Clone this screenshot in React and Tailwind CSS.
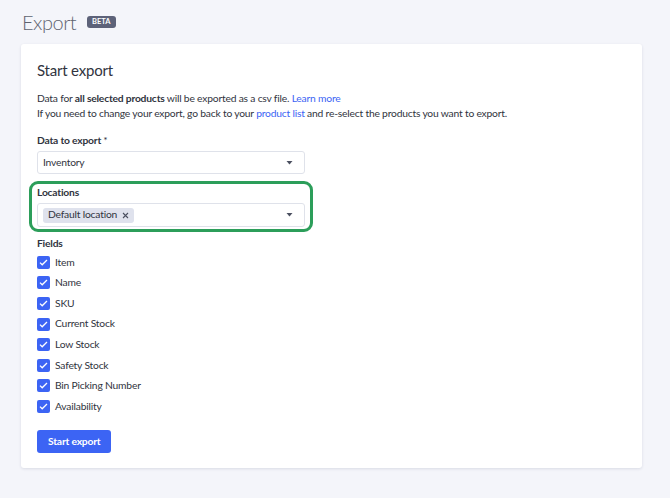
import { useState } from "react";

const fields = [
  "Item",
  "Name",
  "SKU",
  "Current Stock",
  "Low Stock",
  "Safety Stock",
  "Bin Picking Number",
  "Availability",
];

function Caret() {
  return (
    <svg width="7" height="4" viewBox="0 0 7 4" className="shrink-0">
      <path d="M0.5 0h6L3.5 3.6z" fill="#4b5060" />
    </svg>
  );
}

function Check() {
  return (
    <span className="w-[13px] h-[13px] rounded-[2px] bg-[#3c64f4] flex items-center justify-center shrink-0">
      <svg width="9" height="7" viewBox="0 0 9 7">
        <path d="M1 3.6l2.2 2.2L8 1" fill="none" stroke="white" strokeWidth="1.3" />
      </svg>
    </span>
  );
}

export default function App() {
  const [checked] = useState(fields);

  return (
    <div
      className="w-[670px] h-[498px] bg-[#f4f5fa] overflow-hidden text-[#313440] text-[10.3px] tracking-[-0.2px]"
      style={{ fontFamily: "Lato, 'Open Sans', sans-serif" }}
    >
      {/* Header */}
      <div className="flex items-center gap-[11px] pl-[22px] pt-[9px] h-[35px]">
        <span className="text-[20px] font-light text-[#5e6370] leading-none tracking-[-0.5px]">Export</span>
        <span className="bg-[#5d6279] text-white text-[7.5px] font-bold rounded-[3px] px-[5px] py-[2.5px] leading-none tracking-normal">
          BETA
        </span>
      </div>

      {/* Card */}
      <div className="ml-[21px] mt-[9px] w-[621px] h-[424px] bg-white rounded-[3px] shadow-[0_1px_3px_rgba(30,40,80,0.12)] px-[16px] pt-[16px] flex flex-col">
        <h2 className="text-[15px] leading-[20px] tracking-[-0.2px]">Start export</h2>

        <p className="mt-[11px] leading-[15px]">
          Data for <span className="font-bold">all selected products</span> will be exported as a csv file.{" "}
          <span className="text-[#3c64f4]">Learn more</span>
        </p>
        <p className="leading-[15px]">
          If you need to change your export, go back to your{" "}
          <span className="text-[#3c64f4]">product list</span> and re-select the products you want to export.
        </p>

        <label className="mt-[12px] leading-[15px] font-bold">
          Data to export <span className="font-normal">*</span>
        </label>
        <div className="mt-[3px] w-[268px] h-[23px] border border-[#dfe2ea] rounded-[3px] flex items-center justify-between pl-[5px] pr-[11px]">
          <span>Inventory</span>
          <Caret />
        </div>

        {/* Locations (highlighted) */}
        <div className="mt-[7px] -ml-[8px] w-[284px] border-[3px] border-[#2c9e5a] rounded-[9px] px-[5px] pt-[1px] pb-[2px]">
          <div className="leading-[15px] font-bold">Locations</div>
          <div className="mt-[3px] h-[24px] border border-[#dfe2ea] rounded-[3px] flex items-center justify-between pl-[5px] pr-[11px]">
            <span className="h-[15px] bg-[#dfe2ed] rounded-[3px] flex items-center gap-[5px] px-[5px]">
              Default location
              <svg width="7" height="7" viewBox="0 0 7 7">
                <path d="M1 1l5 5M6 1L1 6" stroke="#4b5060" strokeWidth="1.1" />
              </svg>
            </span>
            <Caret />
          </div>
        </div>

        <div className="mt-[4px] leading-[15px] font-bold">Fields</div>
        <div className="flex flex-col mt-[1px]">
          {checked.map((f) => (
            <div key={f} className="h-[20.6px] flex items-center gap-[5px]">
              <Check />
              <span>{f}</span>
            </div>
          ))}
        </div>

        <button className="mt-[13px] self-start h-[23px] px-[11px] bg-[#3c64f4] text-white font-bold rounded-[3px]">
          Start export
        </button>
      </div>
    </div>
  );
}
